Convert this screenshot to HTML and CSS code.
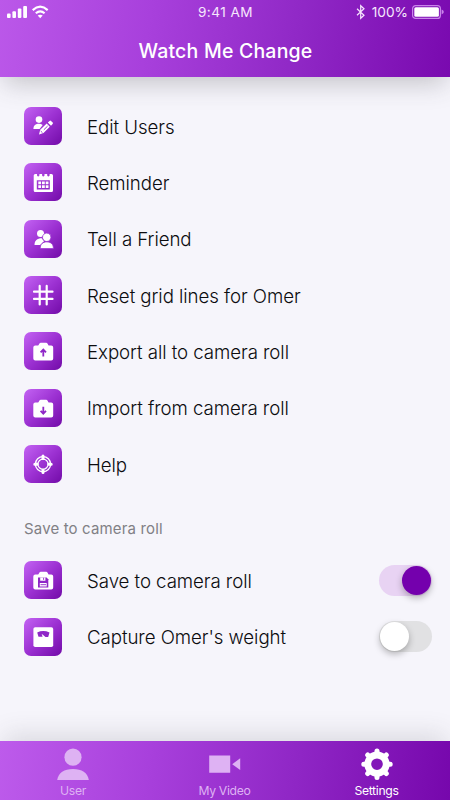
FILE: index.html
```
<!DOCTYPE html>
<html lang="en">
<head>
<meta charset="utf-8">
<title>Watch Me Change</title>
<link rel="stylesheet" href="styles.css">
</head>
<body>
<svg class="defs" width="0" height="0" aria-hidden="true">
  <symbol id="camera" viewBox="0 0 38 38"><path d="M11.3 13.6H14.2L15.2 12Q15.6 10.7 17 10.7H22Q23.3 10.7 23.7 12L24.6 13.6H27.2Q29.2 13.6 29.2 15.6V26.6Q29.2 28.6 27.2 28.6H11.3Q9.3 28.6 9.3 26.6V15.6Q9.3 13.6 11.3 13.6Z"/></symbol>
</svg>
<div class="app">
  <header class="header">
    <div class="status">
      <svg class="signal" viewBox="0 0 44 14"><rect x="0" y="8.5" width="3.6" height="4.5" rx="1"/><rect x="5.4" y="6.2" width="3.6" height="6.8" rx="1"/><rect x="10.8" y="3.6" width="3.6" height="9.4" rx="1"/><rect x="16.2" y="1" width="3.8" height="12" rx="1"/><g class="line"><path d="M25.7 5.1Q33.2-1.7 40.7 5.1"/><path d="M28.8 8.3Q33.2 4.5 37.6 8.3"/></g><path d="M30.7 10.6Q33.2 8.7 35.7 10.6L33.2 13.2Z"/></svg>
      <span class="time">9:41 AM</span>
      <div class="power">
        <svg class="bluetooth" viewBox="0 0 10 16"><path d="M1 4.8 8 11.2 4.7 14.3V1.7L8 4.8 1 11.2"/></svg>
        <span class="percent">100%</span>
        <svg class="battery" viewBox="0 0 32 14"><rect class="case" x=".6" y=".6" width="27.8" height="12.8" rx="3"/><rect x="2.3" y="2.3" width="24.6" height="9.4" rx="1.5"/><path class="cap" d="M29.6 4.6Q31.8 5.5 31.8 7T29.6 9.4Z"/></svg>
      </div>
    </div>
    <h1 class="title">Watch Me Change</h1>
  </header>
  <main class="content">
    <ul class="menu">
      <li class="row"><svg class="tile" viewBox="0 0 38 38"><circle cx="15" cy="12.6" r="3.3"/><path d="M9.4 22C9.4 18.4 11.7 16.8 15 16.8Q17 16.8 18.7 18L15.6 22Z"/><path d="M15 27.4 16.2 22.8 22.7 16.6 25.8 19.8 19.5 26ZM23.8 15.6 25.6 13.9Q26.3 13.3 27 13.9L28.7 15.6Q29.3 16.4 28.6 17.1L27 18.7Z"/><path class="mark thin" d="M16.7 24 18.5 25.8M19.8 22.8 23.6 19.1"/></svg><span class="label">Edit Users</span></li>
      <li class="row"><svg class="tile" viewBox="0 0 38 38"><path fill-rule="evenodd" d="M11.2 11H13V12.5Q14.2 14.3 15.4 12.5V11H18.1V12.5Q19.3 14.3 20.5 12.5V11H23.2V12.5Q24.4 14.3 25.6 12.5V11H27.5Q29 11 29 12.5V27.5Q29 29 27.5 29H11.2Q9.7 29 9.7 27.5V12.5Q9.7 11 11.2 11ZM12.8 17.2V26.5H25.8V17.2Z"/><path d="M14.3 18.5h2.8v2.7h-2.8zM18 18.5h2.8v2.7H18zM21.7 18.5h2.8v2.7h-2.8zM14.3 22.2h2.8v2.7h-2.8zM18 22.2h2.8v2.7H18zM21.7 22.2h2.8v2.7h-2.8z"/></svg><span class="label">Reminder</span></li>
      <li class="row"><svg class="tile" viewBox="0 0 38 38"><circle cx="16.5" cy="13.6" r="3.5"/><path d="M10.5 25C10.5 20.5 13 18.2 17.8 18.2L20 21.2 16.2 25Z"/><g class="front"><circle cx="22.7" cy="17.3" r="4.2"/><path d="M16.2 28.6C16.2 24 18.7 21.9 22.8 21.9S29.4 24 29.4 28.6Z"/></g></svg><span class="label">Tell a Friend</span></li>
      <li class="row"><svg class="tile" viewBox="0 0 38 38"><path class="stroke" d="M15.7 9.9V28.5M22.7 9.9V28.5M10 15.7H28.5M10 22.9H28.5"/></svg><span class="label">Reset grid lines for Omer</span></li>
      <li class="row"><svg class="tile" viewBox="0 0 38 38"><use href="#camera"/><path class="mark" d="M19.3 24.5V18M16.6 20.4 19.3 17.6 22 20.4"/></svg><span class="label">Export all to camera roll</span></li>
      <li class="row"><svg class="tile" viewBox="0 0 38 38"><use href="#camera"/><path class="mark" d="M19.3 17.8V24.3M16.6 21.8 19.3 24.6 22 21.8"/></svg><span class="label">Import from camera roll</span></li>
      <li class="row"><svg class="tile" viewBox="0 0 38 38"><circle class="ring" cx="19" cy="19.2" r="7.6"/><circle class="ring" cx="19" cy="19.2" r="5.1"/><path class="nub" d="M19 11V13.4M19 25V27.4M10.8 19.2H13.2M24.8 19.2H27.2"/></svg><span class="label">Help</span></li>
    </ul>
    <h2 class="section">Save to camera roll</h2>
    <ul class="menu">
      <li class="row"><svg class="tile" viewBox="0 0 38 38"><use href="#camera"/><path class="hole" d="M14 16.5H22.6L24.3 18.2V26.6H14Z"/><path d="M16.2 16.5H21.4V19.7H16.2ZM15.8 22H22.7V25.4H15.8Z"/><path class="mark thin" d="M19.6 16.8V18.9M16.5 23.7H22"/></svg><span class="label">Save to camera roll</span><span class="toggle on"></span></li>
      <li class="row"><svg class="tile" viewBox="0 0 38 38"><rect x="9.4" y="9.2" width="19.8" height="19.8" rx="1.8"/><path class="hole" d="M13.2 14.4Q19.2 11.7 25.5 14.4L24.2 19H21.5L17.6 15.7 18.6 18.7H14.5Z"/></svg><span class="label">Capture Omer's weight</span><span class="toggle"></span></li>
    </ul>
  </main>
  <nav class="tabs">
    <div class="tab"><svg viewBox="0 0 34 34"><circle cx="17" cy="10.2" r="8.6"/><path d="M1.2 33C2.3 25.4 8.2 21.9 17 21.9S31.7 25.4 32.8 33Z"/></svg><span>User</span></div>
    <div class="tab"><svg viewBox="0 0 34 34"><path d="M1.2 8.6H22.2V25.7H1.2ZM24.2 17.2 32.2 11.3V23.1Z"/></svg><span>My Video</span></div>
    <div class="tab active"><svg viewBox="0 0 34 34"><path class="teeth" d="M17 4V8M17 26.4V30.4M3.8 17.2H8M26 17.2H30.2M7.7 7.9 10.5 10.7M23.5 23.7 26.3 26.5M26.3 7.9 23.5 10.7M10.5 23.7 7.7 26.5"/><circle class="gear" cx="17" cy="17.2" r="9.2"/></svg><span>Settings</span></div>
  </nav>
</div>
</body>
</html>
```
FILE: styles.css
```
* { box-sizing: border-box; }
body { margin: 0; font-family: Inter, "Liberation Sans", sans-serif; }
ul { list-style: none; margin: 0; padding: 0; }
.defs { position: absolute; }
.app { width: 450px; height: 800px; display: flex; flex-direction: column; background: #f6f5fb; overflow: hidden; }
.header { height: 77px; flex: none; color: #fff; background: linear-gradient(99deg, #bb58e9 0%, #a840dc 33%, #9028c6 66%, #7909af 100%); box-shadow: 0 10px 26px -4px rgba(60, 60, 70, .28); }
.status { height: 24px; display: grid; grid-template-columns: 1fr auto 1fr; align-items: center; padding: 0 6px 0 7px; }
.signal { width: 44px; height: 14px; fill: #fff; }
.line { fill: none; stroke: #fff; stroke-width: 2.1; }
.time { font-size: 13.6px; letter-spacing: .45px; color: #f6e7fd; }
.power { display: flex; align-items: center; justify-content: flex-end; }
.bluetooth { width: 10px; height: 16px; margin-right: 6px; fill: none; stroke: #f6e7fd; stroke-width: 1.2; }
.percent { font-size: 13.7px; color: #f6e7fd; margin-right: 4px; }
.battery { width: 32px; height: 14px; fill: #fff; }
.case { fill: none; stroke: #c984ea; stroke-width: 1.2; }
.cap { fill: #c984ea; }
.title { margin: 15px 0 0 1px; font-size: 19.5px; line-height: 24px; font-weight: 500; letter-spacing: .2px; text-align: center; }
.content { flex: 1; padding: 21px 18px 0 24px; }
.row { height: 56.33px; display: flex; align-items: center; }
.tile { width: 38px; height: 38px; flex: none; border-radius: 7px; fill: #fff; background: linear-gradient(135deg, #c363f3 0%, #9c31d2 50%, #720ba8 100%); }
.label { margin: 3px 0 0 25px; font-size: 18.7px; line-height: 24px; font-weight: 350; letter-spacing: -.07px; color: #0c0c0f; white-space: nowrap; }
.section { margin: 26px 0 12px; height: 22px; font-size: 15px; line-height: 22px; font-weight: 400; letter-spacing: .15px; color: #818085; }
.stroke { fill: none; stroke: #fff; stroke-width: 2.2; stroke-linecap: round; }
.mark { fill: none; stroke: #8f27c7; stroke-width: 1.8; }
.thin { stroke-width: .9; }
.hole { fill: #8f27c7; }
.front { stroke: #9a31d0; stroke-width: .8; }
.ring { fill: none; stroke: #fff; stroke-width: 1.3; }
.nub { fill: none; stroke: #fff; stroke-width: 3; stroke-linecap: round; }
.toggle { width: 53px; height: 31px; margin-left: auto; padding: 1px; display: flex; border-radius: 16px; background: #e1e1e3; }
.toggle::before { content: ""; width: 29px; height: 29px; border-radius: 50%; background: #fff; box-shadow: 0 3px 7px rgba(0, 0, 0, .28); }
.toggle.on { justify-content: flex-end; background: #e8d3f3; }
.toggle.on::before { background: #7400ad; }
.tabs { height: 59px; flex: none; display: grid; grid-template-columns: 146px 157px 147px; color: #deb2f3; background: linear-gradient(98deg, #bd5beb 0%, #a840dc 33%, #8f26c5 66%, #7607ac 100%); box-shadow: 0 -10px 26px -4px rgba(60, 60, 70, .15); }
.tab { display: flex; flex-direction: column; align-items: center; padding-top: 6px; font-size: 12.2px; letter-spacing: -.33px; line-height: 16px; }
.tab svg { width: 34px; height: 34px; fill: currentColor; margin-bottom: 2px; }
.active { color: #fff; }
.teeth { fill: none; stroke: currentColor; stroke-width: 5; stroke-linecap: round; }
.gear { fill: none; stroke: currentColor; stroke-width: 6.8; }
```
